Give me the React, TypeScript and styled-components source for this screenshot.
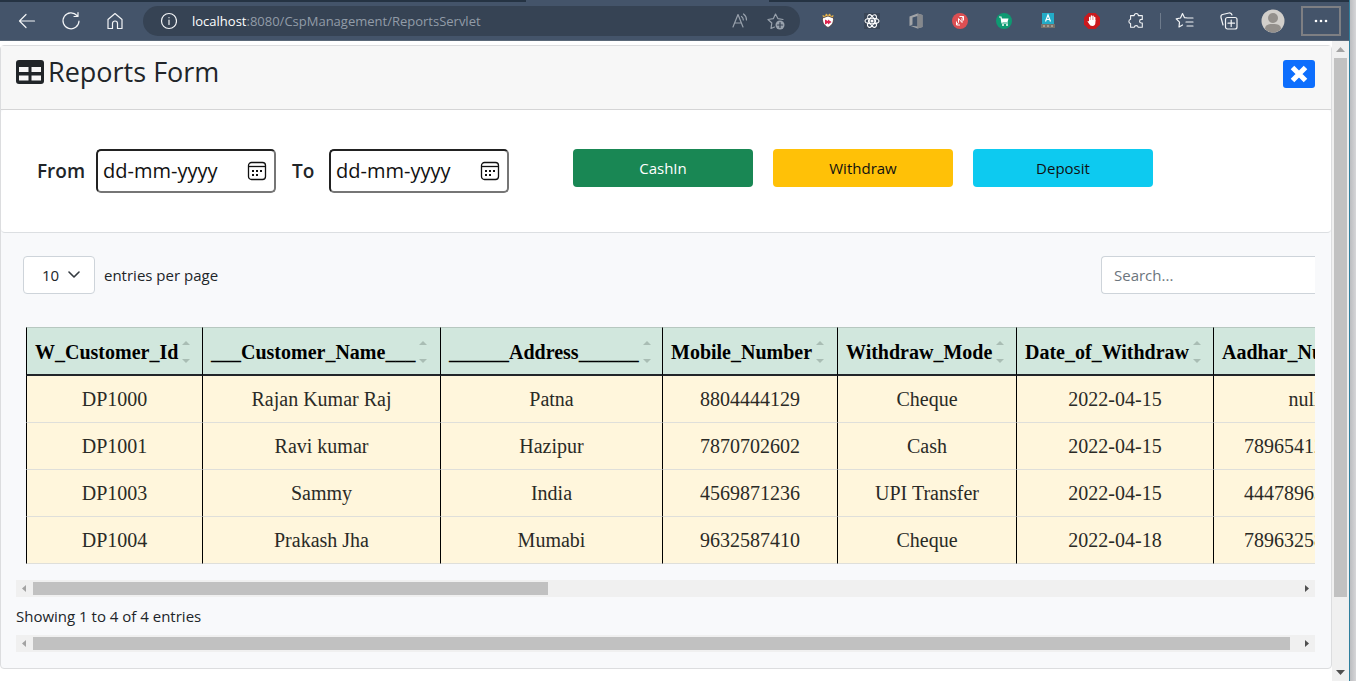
import React from "react";
import styled, { createGlobalStyle } from "styled-components";

const sans = `"Open Sans", "Noto Sans", sans-serif`;
const serif = `"Liberation Serif", "Times New Roman", serif`;

const Global = createGlobalStyle`
  *, *::before, *::after { box-sizing: border-box; }
  body { margin: 0; background: #fff; color: #212529; font-family: ${sans}; font-size: 15px; line-height: 24px; overflow: hidden; }
  button, input, select { font: inherit; color: inherit; margin: 0; }
  button { border: 0; padding: 0; background: none; cursor: pointer; }
  svg { display: block; flex: none; }
`;

const Screen = styled.div`
  display: grid;
  grid-template-columns: minmax(0, 1fr) 6px;
  height: 100vh;
`;
const Browser = styled.div`
  display: flex;
  flex-direction: column;
  min-width: 0;
  min-height: 0;
  border-right: 1px solid #2f7f9d;
`;
const Backdrop = styled.div`
  background: linear-gradient(90deg, #bcbdc0, #d6d6d8);
`;
const TabStrip = styled.div`
  display: grid;
  grid-template-columns: 39% 18% 1fr;
  height: 2px;
  background: #253343;
`;
const ActiveTab = styled.div`
  grid-column: 2;
  background: #44546a;
`;
const Toolbar = styled.header`
  display: flex;
  align-items: center;
  height: 39px;
  padding: 0 8px 0 15px;
  background: #44546a;
  border-bottom: 1px solid #5a6878;
  color: #f2f4f6;
`;
const NavGroup = styled.nav`
  display: flex;
  gap: 20px;
  margin-right: 16px;
`;
const ToolButton = styled.button`
  display: flex;
  align-items: center;
  justify-content: center;
  width: 24px;
  height: 24px;
`;
const AddressBar = styled.div`
  display: flex;
  align-items: center;
  flex: 1;
  height: 30px;
  padding: 0 12px 0 14px;
  border-radius: 15px;
  background: #364354;
`;
const Url = styled.div`
  flex: 1;
  margin-left: 15px;
  color: #929ca8;
  font-size: 13px;
  line-height: 20px;
  white-space: nowrap;
  b { color: #fff; font-weight: 500; }
`;
const AddressTools = styled.div`
  display: flex;
  gap: 12px;
  color: #98a1ac;
`;
const Extensions = styled.div`
  display: flex;
  gap: 20px;
  margin-left: 16px;
`;
const Divider = styled.div`
  width: 1px;
  height: 16px;
  margin: 0 12px;
  background: #6e7b8c;
`;
const BrowserTools = styled.div`
  display: flex;
  align-items: center;
  gap: 20px;
`;
const MoreButton = styled.button`
  display: flex;
  align-items: center;
  justify-content: center;
  width: 40px;
  height: 30px;
  margin-left: 16px;
  border: 2px solid #7e7f83;
`;

const Viewport = styled.div`
  display: grid;
  grid-template-columns: minmax(0, 1fr) 17px;
  flex: 1;
  min-height: 0;
`;
const Page = styled.main`
  min-width: 0;
  padding-top: 4px;
  overflow: hidden;
`;
const Card = styled.section`
  border: 1px solid #dcdddf;
  border-radius: 4px;
  background: #f8f9fb;
`;
const CardHeader = styled.div`
  display: flex;
  align-items: flex-start;
  justify-content: space-between;
  height: 64px;
  padding: 14px 16px 0 15px;
  border-bottom: 1px solid #d5d5d6;
  background: #f7f7f7;
`;
const Title = styled.h1`
  display: flex;
  align-items: center;
  gap: 4px;
  margin: 0;
  font-size: 27px;
  font-weight: 500;
  line-height: 24px;
`;
const CloseButton = styled.button`
  display: flex;
  align-items: center;
  justify-content: center;
  width: 32px;
  height: 28px;
  border-radius: 3px;
  background: #0d6efd;
  color: #fff;
`;
const Filters = styled.form`
  display: flex;
  align-items: flex-start;
  height: 123px;
  padding: 39px 36px 0;
  border-bottom: 1px solid #dcdfe2;
  border-radius: 4px;
  background: #fff;
`;
const FieldLabel = styled.label`
  width: 59px;
  font-size: 19px;
  font-weight: 600;
  line-height: 44px;
  & ~ & { width: 37px; margin-left: 16px; }
`;
const DateField = styled.div`
  display: flex;
  align-items: center;
  width: 180px;
  height: 44px;
  padding: 0 7px 0 5px;
  border: 2px solid;
  border-color: #222 #767676 #767676 #222;
  border-radius: 5px;
`;
const DateInput = styled.input`
  flex: 1;
  min-width: 0;
  padding: 0;
  border: 0;
  background: none;
  font-size: 20px;
  line-height: 28px;
  outline: 0;
  &::placeholder { color: #111; opacity: 1; }
`;
const Actions = styled.div`
  display: flex;
  gap: 20px;
  margin-left: 64px;
`;
const ActionButton = styled.button<{ $bg: string; $fg: string }>`
  width: 180px;
  height: 38px;
  border-radius: 4px;
  background: ${(p) => p.$bg};
  color: ${(p) => p.$fg};
`;
const Report = styled.div`
  padding: 23px 16px 16px 15px;
`;
const TableTools = styled.div`
  display: flex;
  justify-content: space-between;
  padding-left: 7px;
  margin-bottom: 33px;
`;
const PageSize = styled.label`
  display: flex;
  align-items: center;
  gap: 9px;
`;
const SelectBox = styled.span`
  display: grid;
  align-items: center;
  width: 72px;
  height: 38px;
  border: 1px solid #ced4da;
  border-radius: 4px;
  background: #fff;
  & > * { grid-area: 1 / 1; }
  svg { justify-self: end; margin-right: 14px; pointer-events: none; }
`;
const Select = styled.select`
  width: 100%;
  height: 100%;
  padding: 0 18px;
  border: 0;
  appearance: none;
  background: none;
`;
const Search = styled.input`
  width: 214px;
  height: 38px;
  padding: 0 12px;
  border: 1px solid #ced4da;
  border-right: 0;
  border-radius: 4px 0 0 4px;
  background: #fff;
  &::placeholder { color: #6c757d; opacity: 1; }
`;
const TableScroll = styled.div`
  margin: 0 0 16px 10px;
  overflow-x: auto;
  overflow-y: hidden;
  scrollbar-width: none;
`;
const Table = styled.table`
  table-layout: fixed;
  width: 1369px;
  border-collapse: separate;
  border-spacing: 0;
  border-right: 1px solid #000;
  font-family: ${serif};
  font-size: 20px;
`;
const Head = styled.th`
  height: 49px;
  padding: 1px 8px 0;
  border-top: 1px solid #b7c8c0;
  border-left: 1px solid #000;
  border-bottom: 2px solid #212529;
  background: #d1e7dd;
  color: #000;
  font-weight: 700;
`;
const SortButton = styled.button`
  display: flex;
  align-items: center;
  gap: 4px;
  width: 100%;
  font-weight: 700;
  white-space: nowrap;
`;
const Cell = styled.td`
  height: 47px;
  padding: 0 8px;
  border-left: 1px solid #000;
  border-bottom: 1px solid #dfdfda;
  background: #fff6dc;
  color: #2a2a26;
  text-align: center;
`;
const Summary = styled.p`
  margin: 7px 0;
`;

const HTrack = styled.div`
  display: grid;
  grid-template-columns: 17px minmax(0, 1fr) 17px;
  align-items: center;
  height: 17px;
  background: #f0f0f0;
`;
const HThumb = styled.div<{ $share: number }>`
  width: ${(p) => p.$share}%;
  height: 13px;
  background: #c1c1c1;
`;
const VTrack = styled.div`
  display: grid;
  grid-template-rows: 17px minmax(0, 1fr) 17px;
  justify-items: center;
  background: #f0f0f0;
`;
const VThumb = styled.div`
  width: 13px;
  height: 89%;
  background: #c1c1c1;
`;
const Arrow = styled.button<{ $on?: boolean }>`
  display: flex;
  align-items: center;
  justify-content: center;
  width: 17px;
  height: 17px;
  color: ${(p) => (p.$on ? "#505050" : "#a3a3a3")};
`;

const arrowPaths = {
  left: "M6 1v7L2 4.500z",
  right: "M3 1v7l4-3.500z",
  up: "M0 7h9L4.500 2z",
  down: "M0 2h9L4.500 7z",
};
function ScrollArrow({ dir, on }: { dir: keyof typeof arrowPaths; on?: boolean }) {
  return (
    <Arrow type="button" $on={on} aria-label={`Scroll ${dir}`}>
      <svg width="9" height="9" fill="currentColor"><path d={arrowPaths[dir]} /></svg>
    </Arrow>
  );
}
function HScroll({ share }: { share: number }) {
  return (
    <HTrack>
      <ScrollArrow dir="left" />
      <HThumb $share={share} />
      <ScrollArrow dir="right" on />
    </HTrack>
  );
}

function Line({ children, size = 20, sw = 1.2 }: { children: React.ReactNode; size?: number; sw?: number }) {
  return (
    <svg width={size} height={size} viewBox="0 0 20 20" fill="none" stroke="currentColor" strokeWidth={sw} strokeLinecap="round" strokeLinejoin="round">
      {children}
    </svg>
  );
}
const CalendarIcon = () => (
  <svg width="20" height="20" viewBox="0 0 20 20" fill="none" stroke="#111" strokeWidth="1.300">
    <rect x="1.500" y="1.500" width="17" height="17" rx="3" />
    <path d="M1.500 5.500h17" />
    <path d="M9 10h2M13 10h2M5 10h2M5 14h2M9 14h2" strokeWidth="2" />
  </svg>
);
const SortIcon = () => (
  <svg width="8" height="22" viewBox="0 0 8 22" fill="#a9bdb4"><path d="M0 4h8L4 0zM0 18h8l-4 4z" /></svg>
);

const extensions: { name: string; icon: React.ReactNode }[] = [
  {
    name: "Shield",
    icon: (
      <svg width="16" height="16" viewBox="0 0 16 16">
        <path d="M3 4.500 2.500 2l2.500 1L6 .500l2 1.500 2-1.500 1 2.500 2.500-1-.5 2.500z" fill="#e9b54a" />
        <path d="M2.500 5 8 3l5.500 2c.3 4.500-1.500 7.500-5.500 9.500C4 12.500 2.200 9.500 2.500 5z" fill="#fff" stroke="#4a3a36" strokeWidth=".8" />
        <path d="M5 6.500 8 8V6.500l3.500 2.500L8 11.500V10l-3 1.500z" fill="#e0244f" />
      </svg>
    ),
  },
  {
    name: "React",
    icon: (
      <svg width="18" height="18" viewBox="0 0 18 18" fill="none" stroke="#fff" strokeWidth="1.100">
        <path d="M1 1h16v16H1z" fill="#3a4657" stroke="none" />
        <ellipse cx="9" cy="9" rx="7" ry="2.800" />
        <ellipse cx="9" cy="9" rx="7" ry="2.800" transform="rotate(60 9 9)" />
        <ellipse cx="9" cy="9" rx="7" ry="2.800" transform="rotate(120 9 9)" />
        <circle cx="9" cy="9" r="1" fill="#fff" />
      </svg>
    ),
  },
  {
    name: "Office",
    icon: (
      <svg width="16" height="16" viewBox="0 0 16 16">
        <path d="M1.500 3.500 9.500.500l5 1.500v12l-5 1.500-8-3 8 1V3L4.500 4.500v7l-3 1.500z" fill="#a3a5a8" />
        <path d="m9.500.500 5 1.500v12l-5 1.500z" fill="#85888c" />
      </svg>
    ),
  },
  {
    name: "Link",
    icon: (
      <svg width="16" height="16" viewBox="0 0 16 16" fill="none" stroke="#fff" strokeWidth="1">
        <circle cx="8" cy="8" r="8" fill="#dc4f53" stroke="none" />
        <path d="M4.500 8.500V12H8M7.500 3.500h4V7.500M4.500 12l2-2.500V5.500l3.500 4v-4l1.500-2" />
      </svg>
    ),
  },
  {
    name: "Shopping",
    icon: (
      <svg width="16" height="16" viewBox="0 0 16 16">
        <circle cx="8" cy="8" r="8" fill="#0e9a72" />
        <path d="M3 4h2l1 6h6" fill="none" stroke="#fff" strokeWidth="1.200" />
        <path d="M5 5.500h7.500l-1 3.500H5.600z" fill="#fff" />
        <circle cx="7" cy="12" r="1" fill="#fff" /><circle cx="11" cy="12" r="1" fill="#fff" />
      </svg>
    ),
  },
  {
    name: "Dictionary",
    icon: (
      <svg width="16" height="16" viewBox="0 0 16 16">
        <path d="M2 0h12v11H2z" fill="#23abc7" />
        <path d="M1 11h14v4H1z" fill="#76716b" />
        <path d="M3 13h10" stroke="#d3c8b5" strokeDasharray="2 2" />
        <path d="M5.500 8.500 8 2l2.500 6.500M6.300 6.500h3.400" stroke="#fff" fill="none" strokeWidth="1.200" />
      </svg>
    ),
  },
  {
    name: "Ad blocker",
    icon: (
      <svg width="18" height="18" viewBox="0 0 18 18">
        <path d="M5.500 1h7L17 5.500v7L12.500 17h-7L1 12.500v-7z" fill="#c9191e" />
        <path d="M6.700 9V5.500M8.400 8V4M10.100 8V4.300M11.700 9V5.500" stroke="#fff" strokeWidth="1.400" strokeLinecap="round" />
        <path d="M6 8h6.400v2.500c0 2-1 3.500-3 3.500-1.700 0-2.500-.8-3.200-2L4.500 9.500c.5-.7 1.200-.3 1.500 0z" fill="#fff" />
      </svg>
    ),
  },
  {
    name: "Extensions",
    icon: (
      <Line size={18}>
        <path d="M4 4h4a2.300 2.300 0 0 1 4.600 0H17v4.200h-1a2 2 0 0 0 0 4h1V17h-4.500a2.300 2.300 0 0 0-4.500 0H4v-4.200a2.400 2.400 0 0 1 0-4.700z" />
      </Line>
    ),
  },
];

const columns = [
  ["W_Customer_Id", 176],
  ["___Customer_Name___", 238],
  ["______Address______", 222],
  ["Mobile_Number", 175],
  ["Withdraw_Mode", 179],
  ["Date_of_Withdraw", 197],
  ["Aadhar_Number", 181],
] as const;
const rows = [
  ["DP1000", "Rajan Kumar Raj", "Patna", "8804444129", "Cheque", "2022-04-15", "null"],
  ["DP1001", "Ravi kumar", "Hazipur", "7870702602", "Cash", "2022-04-15", "789654123012"],
  ["DP1003", "Sammy", "India", "4569871236", "UPI Transfer", "2022-04-15", "444789632145"],
  ["DP1004", "Prakash Jha", "Mumabi", "9632587410", "Cheque", "2022-04-18", "789632587410"],
];

function DatePicker({ id, label }: { id: string; label: string }) {
  return (
    <>
      <FieldLabel htmlFor={id}>{label}</FieldLabel>
      <DateField>
        <DateInput id={id} type="text" placeholder="dd-mm-yyyy" />
        <button type="button" aria-label={`Choose ${label} date`}><CalendarIcon /></button>
      </DateField>
    </>
  );
}

export default function App() {
  return (
    <Screen>
      <Global />
      <Browser>
        <TabStrip><ActiveTab /></TabStrip>
        <Toolbar>
          <NavGroup>
            <ToolButton aria-label="Back"><Line><path d="M17.500 10H3M9 3.500 2.500 10 9 16.500" /></Line></ToolButton>
            <ToolButton aria-label="Refresh"><Line><path d="M16 4.500A8 8 0 1 0 18 10M17 1.500v4h-4" /></Line></ToolButton>
            <ToolButton aria-label="Home"><Line><path d="M3 8.500 10 2.500l7 6V17.500h-4.500V12.500a2.500 2.500 0 0 0-5 0v5H3z" /></Line></ToolButton>
          </NavGroup>
          <AddressBar>
            <Line><circle cx="12" cy="10" r="7.500" /><path d="M12 9v4.500M12 6.500v.2" /></Line>
            <Url><b>localhost</b>:8080/CspManagement/ReportsServlet</Url>
            <AddressTools>
              <ToolButton aria-label="Read aloud">
                <Line><path d="m3 16 5-12.500L13 16M4.700 12h6.600M11.500 5.500c1.300 1 1.800 2.200 1.800 3.500M13.500 3c2 1.500 3 3.500 3 6" /></Line>
              </ToolButton>
              <ToolButton aria-label="Add favourite">
                <Line><path d="M8.500 16 5 17.500l.8-5.500L2 8.500l5.300-.8L9.500 3 12 7.700l5 .8" /><circle cx="14" cy="14" r="4.500" fill="#98a1ac" stroke="none" /><path d="M14 11.500v5M11.500 14h5" stroke="#364354" /></Line>
              </ToolButton>
            </AddressTools>
          </AddressBar>
          <Extensions>
            {extensions.map((e) => <ToolButton key={e.name} aria-label={e.name}>{e.icon}</ToolButton>)}
          </Extensions>
          <Divider />
          <BrowserTools>
            <ToolButton aria-label="Favourites">
              <Line><path d="M12.500 7 9.500 6.700 7.500 2.500 5.500 7l-4.300.8 3.300 3.300L4 16l3.500-2M12 7h6M11 11h7M12 15h6" /></Line>
            </ToolButton>
            <ToolButton aria-label="Collections">
              <Line><rect x="6.500" y="6.500" width="11.500" height="11.500" rx="2" /><path d="M12.200 9v6.500M9 12.200h6.500M4 14 2 6.500C1.700 5 2 4 3.500 3.500L10 2c1.500-.3 2.500.3 3 2" /></Line>
            </ToolButton>
            <ToolButton aria-label="Profile">
              <svg width="24" height="24" viewBox="0 0 24 24">
                <circle cx="12" cy="12" r="11.500" fill="#d2cfcb" />
                <circle cx="12" cy="9" r="5" fill="#94908c" />
                <path d="M4 20c0-4 3-5 8-5s8 1 8 5c-4 4.500-12 4.500-16 0z" fill="#94908c" />
              </svg>
            </ToolButton>
          </BrowserTools>
          <MoreButton aria-label="Settings and more">
            <svg width="16" height="4" fill="#fff"><circle cx="3" cy="2" r="1.300" /><circle cx="8" cy="2" r="1.300" /><circle cx="13" cy="2" r="1.300" /></svg>
          </MoreButton>
        </Toolbar>
        <Viewport>
          <Page>
            <Card>
              <CardHeader>
                <Title>
                  <svg width="28" height="24" viewBox="0 0 28 24">
                    <rect width="28" height="24" rx="3" fill="#212529" />
                    <path d="M3 7h9.500v5H3zM15.500 7H25v5h-9.500zM3 15.500h9.500v5H3zM15.500 15.500H25v5h-9.500z" fill="#f7f7f7" />
                  </svg>
                  Reports Form
                </Title>
                <CloseButton aria-label="Close">
                  <svg width="18" height="18" viewBox="0 0 18 18" stroke="currentColor" strokeWidth="5"><path d="m2.500 2.500 13 13M15.500 2.500l-13 13" /></svg>
                </CloseButton>
              </CardHeader>
              <Filters>
                <DatePicker id="from-date" label="From" />
                <DatePicker id="to-date" label="To" />
                <Actions>
                  <ActionButton type="button" $bg="#198754" $fg="#fff">CashIn</ActionButton>
                  <ActionButton type="button" $bg="#ffc107" $fg="#111">Withdraw</ActionButton>
                  <ActionButton type="button" $bg="#0dcaf0" $fg="#111">Deposit</ActionButton>
                </Actions>
              </Filters>
              <Report>
                <TableTools>
                  <PageSize>
                    <SelectBox>
                      <Select defaultValue="10"><option>10</option><option>25</option></Select>
                      <svg width="12" height="8" viewBox="0 0 12 8" fill="none" stroke="#343a40" strokeWidth="1.600" strokeLinecap="round" strokeLinejoin="round"><path d="m1 1 5 5 5-5" /></svg>
                    </SelectBox>
                    entries per page
                  </PageSize>
                  <Search type="text" placeholder="Search..." aria-label="Search" />
                </TableTools>
                <TableScroll>
                  <Table>
                    <colgroup>{columns.map(([name, width]) => <col key={name} width={width} />)}</colgroup>
                    <thead>
                      <tr>
                        {columns.map(([name]) => (
                          <Head key={name} scope="col"><SortButton type="button">{name}<SortIcon /></SortButton></Head>
                        ))}
                      </tr>
                    </thead>
                    <tbody>
                      {rows.map((row) => <tr key={row[0]}>{row.map((v, i) => <Cell key={i}>{v}</Cell>)}</tr>)}
                    </tbody>
                  </Table>
                </TableScroll>
                <HScroll share={40.7} />
                <Summary>Showing 1 to 4 of 4 entries</Summary>
                <HScroll share={99.4} />
              </Report>
            </Card>
          </Page>
          <VTrack>
            <ScrollArrow dir="up" />
            <VThumb />
            <ScrollArrow dir="down" on />
          </VTrack>
        </Viewport>
      </Browser>
      <Backdrop />
    </Screen>
  );
}
